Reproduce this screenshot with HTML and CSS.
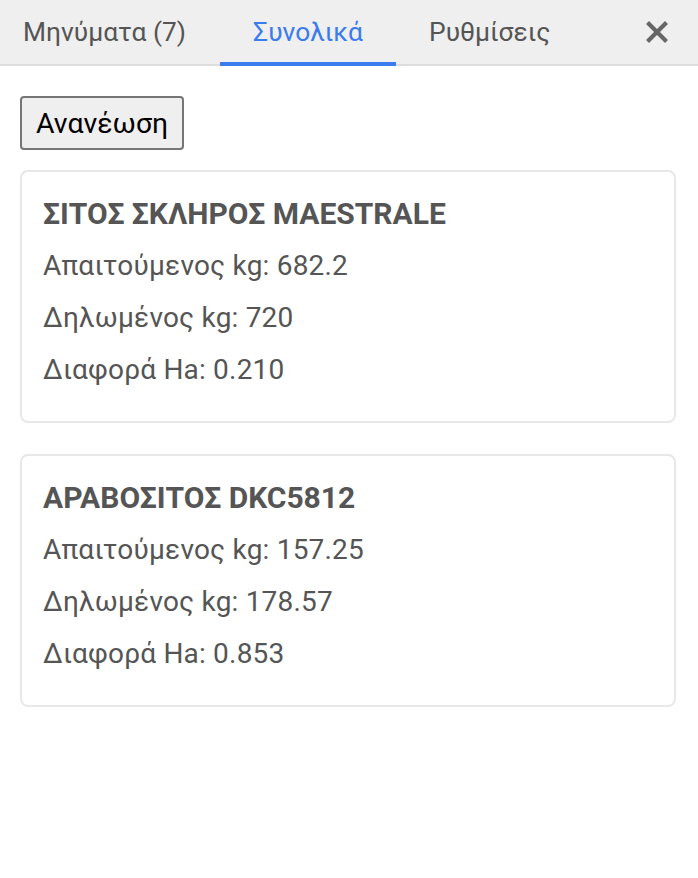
FILE: index.html
```html
<!DOCTYPE html>
<html lang="el">
<head>
<meta charset="utf-8">
<title>Συνολικά</title>
<link rel="stylesheet" href="styles.css">
</head>
<body>
<nav class="tabs">
  <div class="tab first">Μηνύματα (7)</div>
  <div class="tab active">Συνολικά</div>
  <div class="tab">Ρυθμίσεις</div>
  <div class="close" aria-label="Κλείσιμο">
    <svg width="22" height="22" viewBox="0 0 22 22"><path d="M3 3 L19 19 M19 3 L3 19" stroke="#666" stroke-width="4.2" stroke-linecap="square" fill="none"/></svg>
  </div>
</nav>
<main class="content">
  <button class="refresh" type="button">Ανανέωση</button>
  <section class="card">
    <div class="title">ΣΙΤΟΣ ΣΚΛΗΡΟΣ MAESTRALE</div>
    <div class="row">Απαιτούμενος kg: 682.2</div>
    <div class="row">Δηλωμένος kg: 720</div>
    <div class="row">Διαφορά Ha: 0.210</div>
  </section>
  <section class="card">
    <div class="title">ΑΡΑΒΟΣΙΤΟΣ DKC5812</div>
    <div class="row">Απαιτούμενος kg: 157.25</div>
    <div class="row">Δηλωμένος kg: 178.57</div>
    <div class="row">Διαφορά Ha: 0.853</div>
  </section>
</main>
</body>
</html>
```
FILE: styles.css
```css
html, body {
  margin: 0;
  padding: 0;
  background: #fff;
}
body {
  font-family: Roboto, "Noto Sans", sans-serif;
  font-size: 28px;
  color: #555;
}
.tabs {
  display: flex;
  align-items: stretch;
  height: 64px;
  background: #efefef;
  border-bottom: 2px solid #dddddd;
}
.tab {
  display: flex;
  align-items: center;
  padding: 2px 33px 0;
  color: #555;
  font-size: 26.4px;
  border-bottom: 4px solid transparent;
  margin-bottom: -2px;
}
.tab.first {
  padding-left: 23px;
  padding-right: 34px;
}
.tab.active {
  color: #3a7bf0;
  border-bottom-color: #3a7bf0;
}
.close {
  margin-left: auto;
  display: flex;
  align-items: center;
  padding: 0 30px 0 0;
}
.close svg {
  display: block;
}
.content {
  padding: 30px 22px 0 20px;
}
.refresh {
  display: block;
  font-family: Roboto, "Noto Sans", sans-serif;
  font-size: 28.4px;
  color: #000;
  background: #efefef;
  border: 2px solid #767676;
  border-radius: 4px;
  height: 54px;
  padding: 0 14px;
  margin: 0 0 20px 0;
}
.card {
  border: 2px solid #e8e8e8;
  border-radius: 8px;
  padding: 16px 21px 25px;
  margin-bottom: 31px;
}
.title {
  font-size: 30px;
  font-weight: 700;
  line-height: 52px;
}
.row {
  line-height: 52px;
  letter-spacing: 0.2px;
}
```
